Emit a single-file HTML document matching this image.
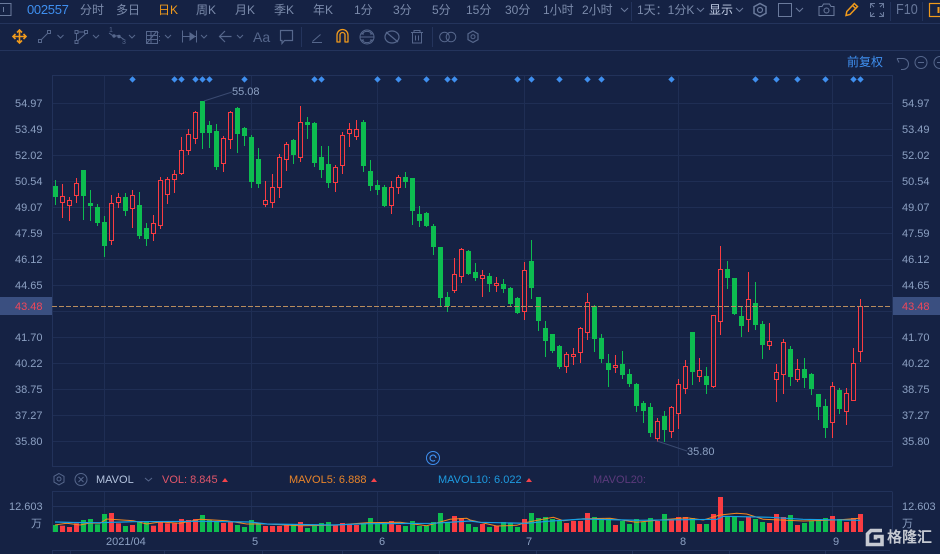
<!DOCTYPE html>
<html><head><meta charset="utf-8">
<style>
html,body{margin:0;padding:0;background:#152244}
#r{position:relative;width:940px;height:554px;overflow:hidden;background:#152244;font-family:"Liberation Sans","Noto Sans CJK SC",sans-serif;font-size:12px;color:#7b8bab}
.t{position:absolute;white-space:nowrap;line-height:14px}
.a{font-size:11px;color:#8ca0c2;margin-top:1px}
svg{position:absolute;left:0;top:0}
</style></head><body><div id="r">
<svg id="c" width="940" height="554" viewBox="0 0 940 554"></svg>

<svg width="940" height="554" viewBox="0 0 940 554" fill="none" stroke="#56678c" stroke-width="1">
<!-- header lines -->
<path d="M0 23.5H940M0 50.5H940" stroke="#24345c"/>
<path d="M631.5 2V21M890.5 2V21M922.5 2V21" stroke="#24345c"/>
<path d="M301.5 27V47M432.5 27V47" stroke="#24345c"/>
<rect x="-2" y="3.5" width="13" height="12" stroke="#6a7a9c"/><path d="M3.5 7V12" stroke="#6a7a9c"/>
<!-- header icons -->
<path d="M621 8l3.500 3.500L628 8M697 8l3.500 3.500L704 8M736 8l3.500 3.500L743 8M796 8l3.500 3.500L803 8" stroke="#6a7a9c"/>
<path d="M760 3.500l6 3.200v6.600l-6 3.200-6-3.200V6.700z" stroke="#6a7a9c" stroke-width="1.500"/><circle cx="760" cy="10" r="2.500" stroke="#6a7a9c" stroke-width="1.200"/>
<rect x="778.500" y="3.500" width="13" height="13" stroke="#6a7a9c"/>
<path d="M819 6.500h3l1.500-2.500h6l1.500 2.500h3v9h-15z" stroke="#6a7a9c"/><circle cx="826.500" cy="10.500" r="2.500" stroke="#6a7a9c"/>
<path d="M846 15.500l.8-4 7.500-8 3.200 3-7.500 8zM852.500 5.500l3.200 3" stroke="#f09a1c" stroke-width="1.500"/>
<path d="M870.500 8V3.500H875M879 3.500h4.500V8M870.500 12v4.500H875M879 16.500h4.500V12M871 4l3 3M883 4l-3 3M871 16l3-3M883 16l-3-3" stroke="#6a7a9c"/>
<rect x="929.500" y="3.500" width="14" height="13" stroke="#f09a1c" stroke-width="1.200"/><path d="M938.500 7V13" stroke="#f09a1c" stroke-width="2"/>
<!-- toolbar icons -->
<g stroke="#f09a1c" stroke-width="1.600"><path d="M13 36.500H26M19.500 30V43"/><path d="M15.500 34l-2.500 2.500 2.500 2.500M23.500 34l2.500 2.500-2.500 2.500M17 32.500l2.500-2.500 2.500 2.500M17 40.500l2.500 2.500 2.500-2.500"/></g>
<rect x="38.500" y="39.500" width="3" height="3"/><rect x="47.500" y="30.500" width="3" height="3"/><path d="M41.500 39.500l6-6"/>
<path d="M57.500 35l3 3 3-3M93 35l3 3 3-3M129 35l3 3 3-3M165 35l3 3 3-3M201 35l3 3 3-3M237 35l3 3 3-3"/>
<rect x="75" y="30.500" width="3" height="3"/><rect x="84.500" y="30.500" width="3" height="3"/><rect x="75" y="40.500" width="3" height="3"/><path d="M78 32h6.500M76.500 33.500v7M78 40.500l8-7"/>
<path d="M109 33l5 3.500 4-1 6 4" /><circle cx="114" cy="36" r="1.200" fill="#56678c"/><circle cx="119" cy="36.500" r="1.200" fill="#56678c"/>
<rect x="146.500" y="31.500" width="11" height="12"/><path d="M146.500 35.500h11M146.500 39.500h11M147 43l10-12M151 31.500v12M158 32v1M159.500 36v1M159.500 40v1"/>
<path d="M182.500 30.500v12M196.500 30.500v12M183 36.500h13"/><path d="M190 33l5 3.500-5 3.500z" fill="#56678c"/>
<path d="M219 36.500h12.500M225 31l-5.500 5.500 5.500 5.500" stroke-width="1.200"/>
<path d="M280.500 30.500h12v10h-8l-2.500 3v-3h-1.500z" stroke-width="1.200"/>
<path d="M312 42.500h10M312.500 41.500l8-7" />
<path d="M337.500 43v-7a5.500 5.500 0 0 1 11 0v7M340.500 43v-7a2.500 2.500 0 0 1 5 0v7M337 43h4M345 43h4" stroke="#f09a1c" stroke-width="1.300" transform="translate(-.5 -1)"/>
<path d="M361 34h3M370 34h3M361 40h3M370 40h3M360.500 37h14"/><path d="M362 34a6 6 0 0 1 10 0M362 40a6 6 0 0 0 10 0"/><circle cx="367" cy="37" r="7"/>
<ellipse cx="392" cy="37" rx="7" ry="6" stroke-width="1.200"/><path d="M386 32l12 10" stroke-width="1.200"/>
<path d="M411 32.500h12M414 32.500v-2h6v2M412.500 32.500v10.500h9v-10.500M415.500 35.500v5M418.500 35.500v5"/>
<circle cx="444.500" cy="37" r="4.800"/><circle cx="451" cy="37" r="4.800"/>
<path d="M473 31l5 2.800v5.800l-5 2.800-5-2.800v-5.800z" stroke-width="1.200"/><circle cx="473" cy="36.700" r="2"/>
<!-- top right -->
<path d="M897 58.500h6a5.500 5.500 0 0 1 0 11h-2M897 58.500l2 4" stroke="#56678c"/>
<circle cx="921" cy="62.500" r="6"/><path d="M918 62.500h6"/>
<circle cx="940" cy="62.500" r="6"/><path d="M937 62.500h6"/>
<!-- volume row icons -->
<path d="M59 473.500l5 2.800v5.800l-5 2.800-5-2.800v-5.800z"/><circle cx="59" cy="479" r="2"/>
<circle cx="81" cy="479.500" r="6"/><path d="M78.500 477l5 5M83.500 477l-5 5"/>
<path d="M145 478l3.500 3 3.500-3"/>
<path d="M222 482l3-4 3 4z" fill="#f4434a" stroke="none"/><path d="M371 482l3-4 3 4z" fill="#f4434a" stroke="none"/><path d="M526 482l3-4 3 4z" fill="#f4434a" stroke="none"/>
<!-- at icon -->
<g stroke="#3f8fef"><circle cx="433" cy="458" r="6.500"/><path d="M436 458a3 3 0 1 0-1 2.300" stroke-width="1.200"/></g>
<!-- logo -->
<path d="M882 530.500h-11l-3.500 3.500v10.500h14.500v-8h-6.500v3" stroke="#c6cad2" stroke-width="3.600"/>
</svg>

<span class="t" style="left:27px;top:3px;color:#3f8fef;font-size:13px;letter-spacing:-.3px">002557</span>
<span class="t" style="left:80px;top:3px">分时</span>
<span class="t" style="left:116px;top:3px">多日</span>
<span class="t" style="left:158px;top:3px;color:#f09a1c">日K</span>
<span class="t" style="left:196px;top:3px">周K</span>
<span class="t" style="left:235px;top:3px">月K</span>
<span class="t" style="left:274px;top:3px">季K</span>
<span class="t" style="left:313px;top:3px">年K</span>
<span class="t" style="left:354px;top:3px">1分</span>
<span class="t" style="left:393px;top:3px">3分</span>
<span class="t" style="left:432px;top:3px">5分</span>
<span class="t" style="left:466px;top:3px">15分</span>
<span class="t" style="left:505px;top:3px">30分</span>
<span class="t" style="left:543px;top:3px">1小时</span>
<span class="t" style="left:582px;top:3px">2小时</span>
<span class="t" style="left:637px;top:3px">1天：1分K</span>
<span class="t" style="left:709px;top:3px;color:#c3cfe6">显示</span>
<span class="t" style="left:896px;top:3px;font-size:15px;color:#67779a;transform:scaleX(.84);transform-origin:left center">F10</span>
<span class="t" style="left:253px;top:30px;font-size:14px;color:#56678c">Aa</span>
<span class="t" style="left:109px;top:24px;font-size:7px;color:#56678c">1</span>
<span class="t" style="left:122px;top:36px;font-size:7px;color:#56678c">3</span>
<span class="t" style="left:847px;top:55px;color:#3f8fef">前复权</span>

<span class="t a" style="left:15px;top:96px">54.97</span><span class="t a" style="left:15px;top:122px">53.49</span><span class="t a" style="left:15px;top:148px">52.02</span><span class="t a" style="left:15px;top:174px">50.54</span><span class="t a" style="left:15px;top:200px">49.07</span><span class="t a" style="left:15px;top:226px">47.59</span><span class="t a" style="left:15px;top:252px">46.12</span><span class="t a" style="left:15px;top:278px">44.65</span><span class="t a" style="left:15px;top:330px">41.70</span><span class="t a" style="left:15px;top:356px">40.22</span><span class="t a" style="left:15px;top:382px">38.75</span><span class="t a" style="left:15px;top:408px">37.27</span><span class="t a" style="left:15px;top:434px">35.80</span>
<span class="t a" style="left:902px;top:96px">54.97</span><span class="t a" style="left:902px;top:122px">53.49</span><span class="t a" style="left:902px;top:148px">52.02</span><span class="t a" style="left:902px;top:174px">50.54</span><span class="t a" style="left:902px;top:200px">49.07</span><span class="t a" style="left:902px;top:226px">47.59</span><span class="t a" style="left:902px;top:252px">46.12</span><span class="t a" style="left:902px;top:278px">44.65</span><span class="t a" style="left:902px;top:330px">41.70</span><span class="t a" style="left:902px;top:356px">40.22</span><span class="t a" style="left:902px;top:382px">38.75</span><span class="t a" style="left:902px;top:408px">37.27</span><span class="t a" style="left:902px;top:434px">35.80</span>
<span class="t a" style="left:15px;top:299px;color:#f0475a">43.48</span>
<span class="t a" style="left:902px;top:299px;color:#f0475a">43.48</span>
<span class="t a" style="left:232px;top:84px">55.08</span>
<span class="t a" style="left:687px;top:444px">35.80</span>

<span class="t" style="left:96px;top:473px;font-size:11px;color:#b4c3de">MAVOL</span>
<span class="t" style="left:162px;top:473px;font-size:11px;color:#e0566a">VOL: 8.845</span>
<span class="t" style="left:289px;top:473px;font-size:11px;color:#e8842a">MAVOL5: 6.888</span>
<span class="t" style="left:438px;top:473px;font-size:11px;color:#1e9be0">MAVOL10: 6.022</span>
<span class="t" style="left:593px;top:473px;font-size:11px;color:#5c3a7c">MAVOL20:</span>

<span class="t a" style="left:9px;top:499px">12.603</span>
<span class="t a" style="left:31px;top:516px">万</span>
<span class="t a" style="left:902px;top:499px">12.603</span>
<span class="t a" style="left:902px;top:516px">万</span>
<span class="t a" style="left:106px;top:534px">2021/04</span>
<span class="t a" style="left:252px;top:534px">5</span><span class="t a" style="left:379px;top:534px">6</span><span class="t a" style="left:526px;top:534px">7</span><span class="t a" style="left:680px;top:534px">8</span><span class="t a" style="left:833px;top:534px">9</span>
<span class="t" style="left:887px;top:530px;font-size:15px;font-weight:bold;color:#c6cad2;line-height:16px">格隆汇</span>

<script>
var G='#0dbd50',R='#fa3c42',B='#152244',L='#1f2e54';
var d=[
['g',180,186,197,205],['r',184,196.5,202.5,218],['r',197,200.5,205.5,221],['r',178,183.5,195.5,203],['g',170,170,196,220],['g',190,203,206,221],['g',204,207,223,226],['g',216,222,246,257],['r',195,203.5,240.5,245],['r',193,197.5,202.5,208],
['g',193,197,211,216],['r',190,195.5,208.5,228],['g',192,205,236,239],['g',223,228,239,246],['r',215,223.5,233.5,241],['r',177,180.5,225.5,229],['r',177,179.5,194.5,204],['r',170,174.5,179.5,193],['r',137,150.5,173.5,175],['r',129,134.5,150.5,155],
['r',111,112.5,138.5,144],['g',101,101,133,149],['g',121,125,133,148],['g',124,131,167,170],['r',136,138.5,163.5,172],['r',111,112.5,139.5,149],['g',107,108,134,153],['g',127,128,136,146],['g',135,137,182,188],['g',148,159,184,188],
['r',181,200.5,204.5,207],['r',174,187.5,202.5,208],['r',154,157.5,187.5,198],['r',142,144.5,159.5,171],['g',139,140,155,164],['r',106,122.5,157.5,162],['g',117,122,125,139],['g',122,123,163,167],['g',146,157,170,178],['g',146,164,183,188],
['r',165,167.5,182.5,192],['r',132,135.5,165.5,174],['r',123,129.5,133.5,147],['r',120,129.5,136.5,140],['g',120,122,166,172],['g',160,171,186,191],['g',180,185,190,195],['g',185,187,206,207],['r',181,187.5,205.5,214],['r',175,177.5,187.5,194],
['g',172,177,182,188],['g',178,178,211,225],['g',206,214,221,227],['g',212,213,226,227],['g',224,226,247,255],['g',247,247,298,306],['g',292,297,306,312],['r',258,274.5,290.5,293],['r',248,249.5,276.5,283],['g',250,251,274,275],
['g',263,272,278,281],['r',270,275.5,278.5,297],['g',273,276,284,292],['r',277,283.5,285.5,292],['g',279,284,289,293],['g',287,288,304,306],['g',297,298,313,314],['r',262,270.5,311.5,320],['g',240,261,288,299],['g',297,297,321,331],
['g',321,328,341,357],['g',334,334,351,353],['g',345,346,367,369],['r',352,354.5,366.5,373],['r',348,354.5,356.5,365],['r',327,328.5,352.5,363],['r',293,302.5,332.5,340],['g',305,306,339,352],['g',334,338,359,363],['g',354,363,370,387],
['r',355,365.5,367.5,373],['g',351,364,375,379],['g',369,374,384,387],['g',383,384,406,412],['g',401,403,411,423],['g',403,407,433,437],['r',418,421.5,438.5,442],['g',411,416,430,442],['r',406,407.5,431.5,438],['r',379,384.5,413.5,429],
['r',360,366.5,388.5,394],['g',332,332,372,385],['r',358,370.5,376.5,382],['g',367,376,385,394],['r',315,315.5,386.5,388],['r',246,269.5,321.5,335],['g',261,269,278,289],['g',278,278,314,315],['g',306,316,326,337],['r',272,299.5,319.5,332],
['g',282,303,325,330],['g',321,324,345,359],['r',323,341.5,345.5,350],['r',364,372.5,379.5,402],['r',339,342.5,374.5,394],['g',346,349,377,386],['r',359,369.5,379.5,382],['g',358,369,378,388],['g',373,374,389,395],['g',394,394,407,420],
['g',399,406,428,438],['r',382,386.5,422.5,438],['g',388,390,409,414],['r',388,393.5,411.5,425],['r',348,363.5,400.5,401],['r',299,306.5,351.5,362]];
var v=[195,197,201,190,180,177,193,162,159,190,198,195,186,186,197,186,190,190,177,180,177,165,180,183,189,186,195,201,180,189,198,198,198,195,195,186,204,195,189,186,195,189,192,195,189,174,190,190,183,195,198,183,198,198,186,159,186,168,174,192,201,192,201,198,186,189,201,177,159,174,171,177,180,189,183,183,159,171,174,174,195,183,192,177,186,174,183,162,180,171,171,174,192,192,162,111,171,171,183,171,177,186,189,162,171,165,195,189,183,177,174,168,177,186,174,162];
var blue=[[55,522],[73,522.5],[100,522.7],[133,521.7],[200,521.3],[250,522],[267,524],[333,525],[367,523.7],[433,523.3],[470,521],[480,522.3],[527,523.3],[547,521.3],[583,519],[637,520.3],[717,519.3],[723,516.3],[770,517.3],[803,519.3],[860,520.3]];
var or7=[[165,195],[200,190],[240,195],[270,189],[300,190],[320,177],[400,182],[440,192],[480,186],[540,190],[600,178],[680,182],[740,192],[800,192],[900,197],[1000,196],[1100,188],[1200,187],[1280,197],[1350,178],[1400,175]];
var or8=[[0,180],[80,198],[140,196],[170,187],[250,172],[280,182],[340,176],[420,175],[500,187],[570,180],[650,173],[700,180],[750,165],[800,160],[830,162],[880,178],[930,180],[1000,183],[1100,180],[1170,175]];
var dots=[132,174,181,195,202,209,244,314,321,377,398,426,447,454,517,531,559,587,601,671,755,776,797,825,853,860];
var s='';
// bands
s+='<rect x="0" y="297" width="52" height="18" fill="#3a4f80"/><rect x="893" y="297" width="47" height="18" fill="#3a4f80"/>';
// grid
var h=[103,129,155,181,207,233,259,285,311,337,363,389,415,441];
h.forEach(function(y){s+='<path d="M52 '+(y+.5)+'H892" stroke="'+L+'"/>'});
[104,251,377,524,678,832].forEach(function(x){s+='<path d="M'+(x+.5)+' 75V466M'+(x+.5)+' 492V532" stroke="'+L+'"/>'});
s+='<path d="M52.500 75V466M892.500 75V466M52.500 492V532M892.500 492V532M52 75.500H892.500M52 466.500H892.500M52 491.500H892.500M52 506.500H892.500" stroke="#22325a"/>';
s+='<path d="M52.500 550.500H890M52.500 550V554M70.500 550V554M164.500 550V554M262.500 550V554M342.500 550V554M439.500 550V554M536.500 550V554M632.500 550V554M729.500 550V554M825.500 550V554" stroke="#22325a"/>';
// volume
v.forEach(function(z,i){var x=53+7*i,t=460+z/3,c=d[i][0]=='g'?G:R;s+='<rect x="'+x+'" y="'+t.toFixed(1)+'" width="5" height="'+(532-t).toFixed(1)+'" fill="'+c+'"/>'});
var or='';or7.forEach(function(p){or+=(p[0]/3).toFixed(1)+','+(460+p[1]/3).toFixed(1)+' '});or8.forEach(function(p){or+=(470+p[0]/3).toFixed(1)+','+(460+p[1]/3).toFixed(1)+' '});
s+='<polyline points="'+or+'" fill="none" stroke="#f5881f"/>';
s+='<polyline points="'+blue.map(function(p){return p.join(',')}).join(' ')+'" fill="none" stroke="#14a0e6" stroke-width="1.200"/>';
// candles
d.forEach(function(c,i){var x=55.5+7*i,col=c[0]=='g'?G:R;
s+='<path d="M'+x+' '+c[1]+'V'+c[4]+'" stroke="'+col+'"/>';
if(c[0]=='g')s+='<rect x="'+(x-2.5)+'" y="'+c[2]+'" width="5" height="'+(c[3]-c[2])+'" fill="'+G+'"/>';
else s+='<rect x="'+(x-2)+'" y="'+c[2]+'" width="4" height="'+(c[3]-c[2])+'" fill="'+B+'" stroke="'+R+'"/>';
});
// dashed price
s+='<path d="M52 306.500H892" stroke="#b88d5e" stroke-dasharray="5 2"/>';
// hi/lo leader lines
s+='<path d="M204 101L232 92M657 441L687 451" stroke="#3a4a70"/>';
// dots
dots.forEach(function(x){var X=x+.5;s+='<path d="M'+X+' 76.200l3.200 3.200-3.200 3.200-3.200-3.200z" fill="#3f8fef"/>'});
document.getElementById('c').innerHTML=s;
</script>
</div></body></html>
